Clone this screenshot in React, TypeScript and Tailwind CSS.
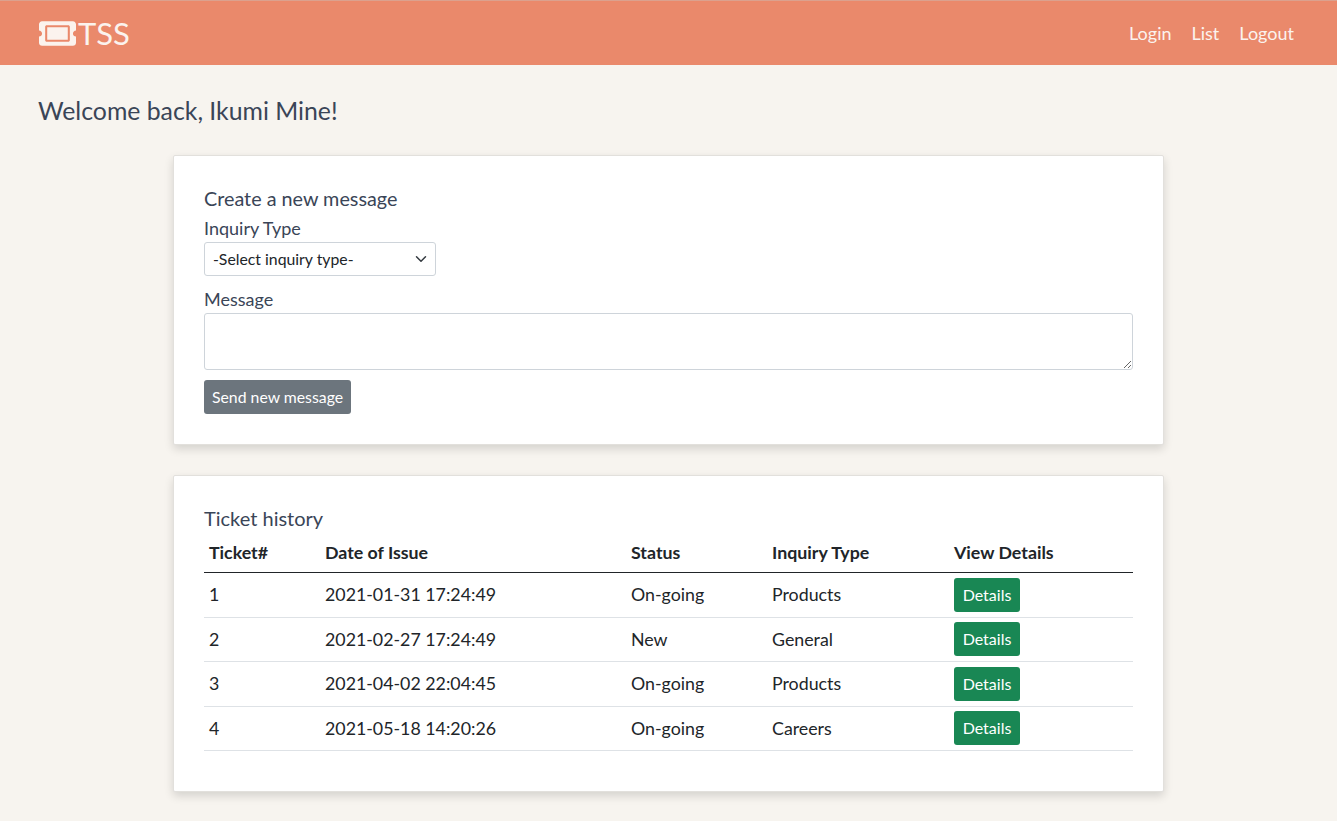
import React from "react";
import { FaTicketAlt } from "react-icons/fa";

const rows = [
  ["1", "2021-01-31 17:24:49", "On-going", "Products"],
  ["2", "2021-02-27 17:24:49", "New", "General"],
  ["3", "2021-04-02 22:04:45", "On-going", "Products"],
  ["4", "2021-05-18 14:20:26", "On-going", "Careers"],
];

export default function App() {
  return (
    <div className="min-h-[821px] bg-[#f7f4ef] font-['Lato','Liberation_Sans',sans-serif] text-[#3a4557]">
      <header className="flex h-[65px] items-center justify-between border-t border-t-[#dba18e] bg-[#ea896b] pl-[39px] pr-[43px]">
        <div className="flex items-center text-[#fbf3ee]">
          <FaTicketAlt size={37} />
          <span className="ml-[2px] text-[31px] leading-none">TSS</span>
        </div>
        <nav className="flex gap-5 text-[18px] text-[#fbf3ee]">
          <a>Login</a>
          <a>List</a>
          <a>Logout</a>
        </nav>
      </header>
      <main className="px-[38px] pt-[30px]">
        <h1 className="text-[24.8px] leading-[32px]">Welcome back, Ikumi Mine!</h1>
        <div className="mx-auto mt-[28px] flex w-[991px] flex-col gap-[30px]">
          <section className="h-[290px] rounded-[2px] border border-[#e2e0dc] bg-white px-[30px] pt-[29px] shadow-[0_4px_10px_rgba(0,0,0,0.14)]">
            <h2 className="text-[19.8px] leading-[26px]">Create a new message</h2>
            <label className="mt-[5px] block text-[18px] leading-[24px]">Inquiry Type</label>
            <div className="relative mt-[2px] flex h-[34px] w-[232px] items-center rounded-[3px] border border-[#ced4da] pl-2 text-[15.8px] text-[#212529]">
              -Select inquiry type-
              <svg className="absolute right-[8px] top-[10px]" width="12" height="12" viewBox="0 0 16 16" fill="none" stroke="#343a40" strokeWidth="2" strokeLinecap="round" strokeLinejoin="round">
                <path d="M2 5l6 6 6-6" />
              </svg>
            </div>
            <label className="mt-[11px] block text-[18px] leading-[24px]">Message</label>
            <textarea className="mt-[2px] block h-[57px] w-full rounded-[3px] border border-[#ced4da] bg-white" />
            <button className="mt-[10px] block h-[34px] rounded-[3px] bg-[#6c757d] px-2 text-[15.8px] text-white">Send new message</button>
          </section>
          <section className="h-[317px] rounded-[2px] border border-[#e2e0dc] bg-white px-[30px] pt-[29px] shadow-[0_4px_10px_rgba(0,0,0,0.14)]">
            <h2 className="text-[20px] leading-[26px]">Ticket history</h2>
            <table className="mt-[5px] w-[929px] table-fixed border-collapse text-[17.8px] text-[#212529]">
              <colgroup>
                <col className="w-[116px]" />
                <col className="w-[306px]" />
                <col className="w-[141px]" />
                <col className="w-[182px]" />
                <col />
              </colgroup>
              <thead>
                <tr className="h-[36.5px] border-b border-b-[#212529] text-left">
                  <th className="pb-[4px] pl-[5px] font-bold">Ticket#</th>
                  <th className="pb-[4px] pl-[5px] font-bold">Date of Issue</th>
                  <th className="pb-[4px] pl-[5px] font-bold">Status</th>
                  <th className="pb-[4px] pl-[5px] font-bold">Inquiry Type</th>
                  <th className="pb-[4px] pl-[5px] font-bold">View Details</th>
                </tr>
              </thead>
              <tbody>
                {rows.map((r) => (
                  <tr key={r[0]} className="h-[44.5px] border-b border-b-[#dee2e6]">
                    <td className="pl-[5px]">{r[0]}</td>
                    <td className="pl-[5px]">{r[1]}</td>
                    <td className="pl-[5px]">{r[2]}</td>
                    <td className="pl-[5px]">{r[3]}</td>
                    <td className="pl-[5px]">
                      <button className="block h-[34px] w-[66px] rounded-[3px] bg-[#198754] text-center text-[16px] text-white">Details</button>
                    </td>
                  </tr>
                ))}
              </tbody>
            </table>
          </section>
        </div>
      </main>
    </div>
  );
}
